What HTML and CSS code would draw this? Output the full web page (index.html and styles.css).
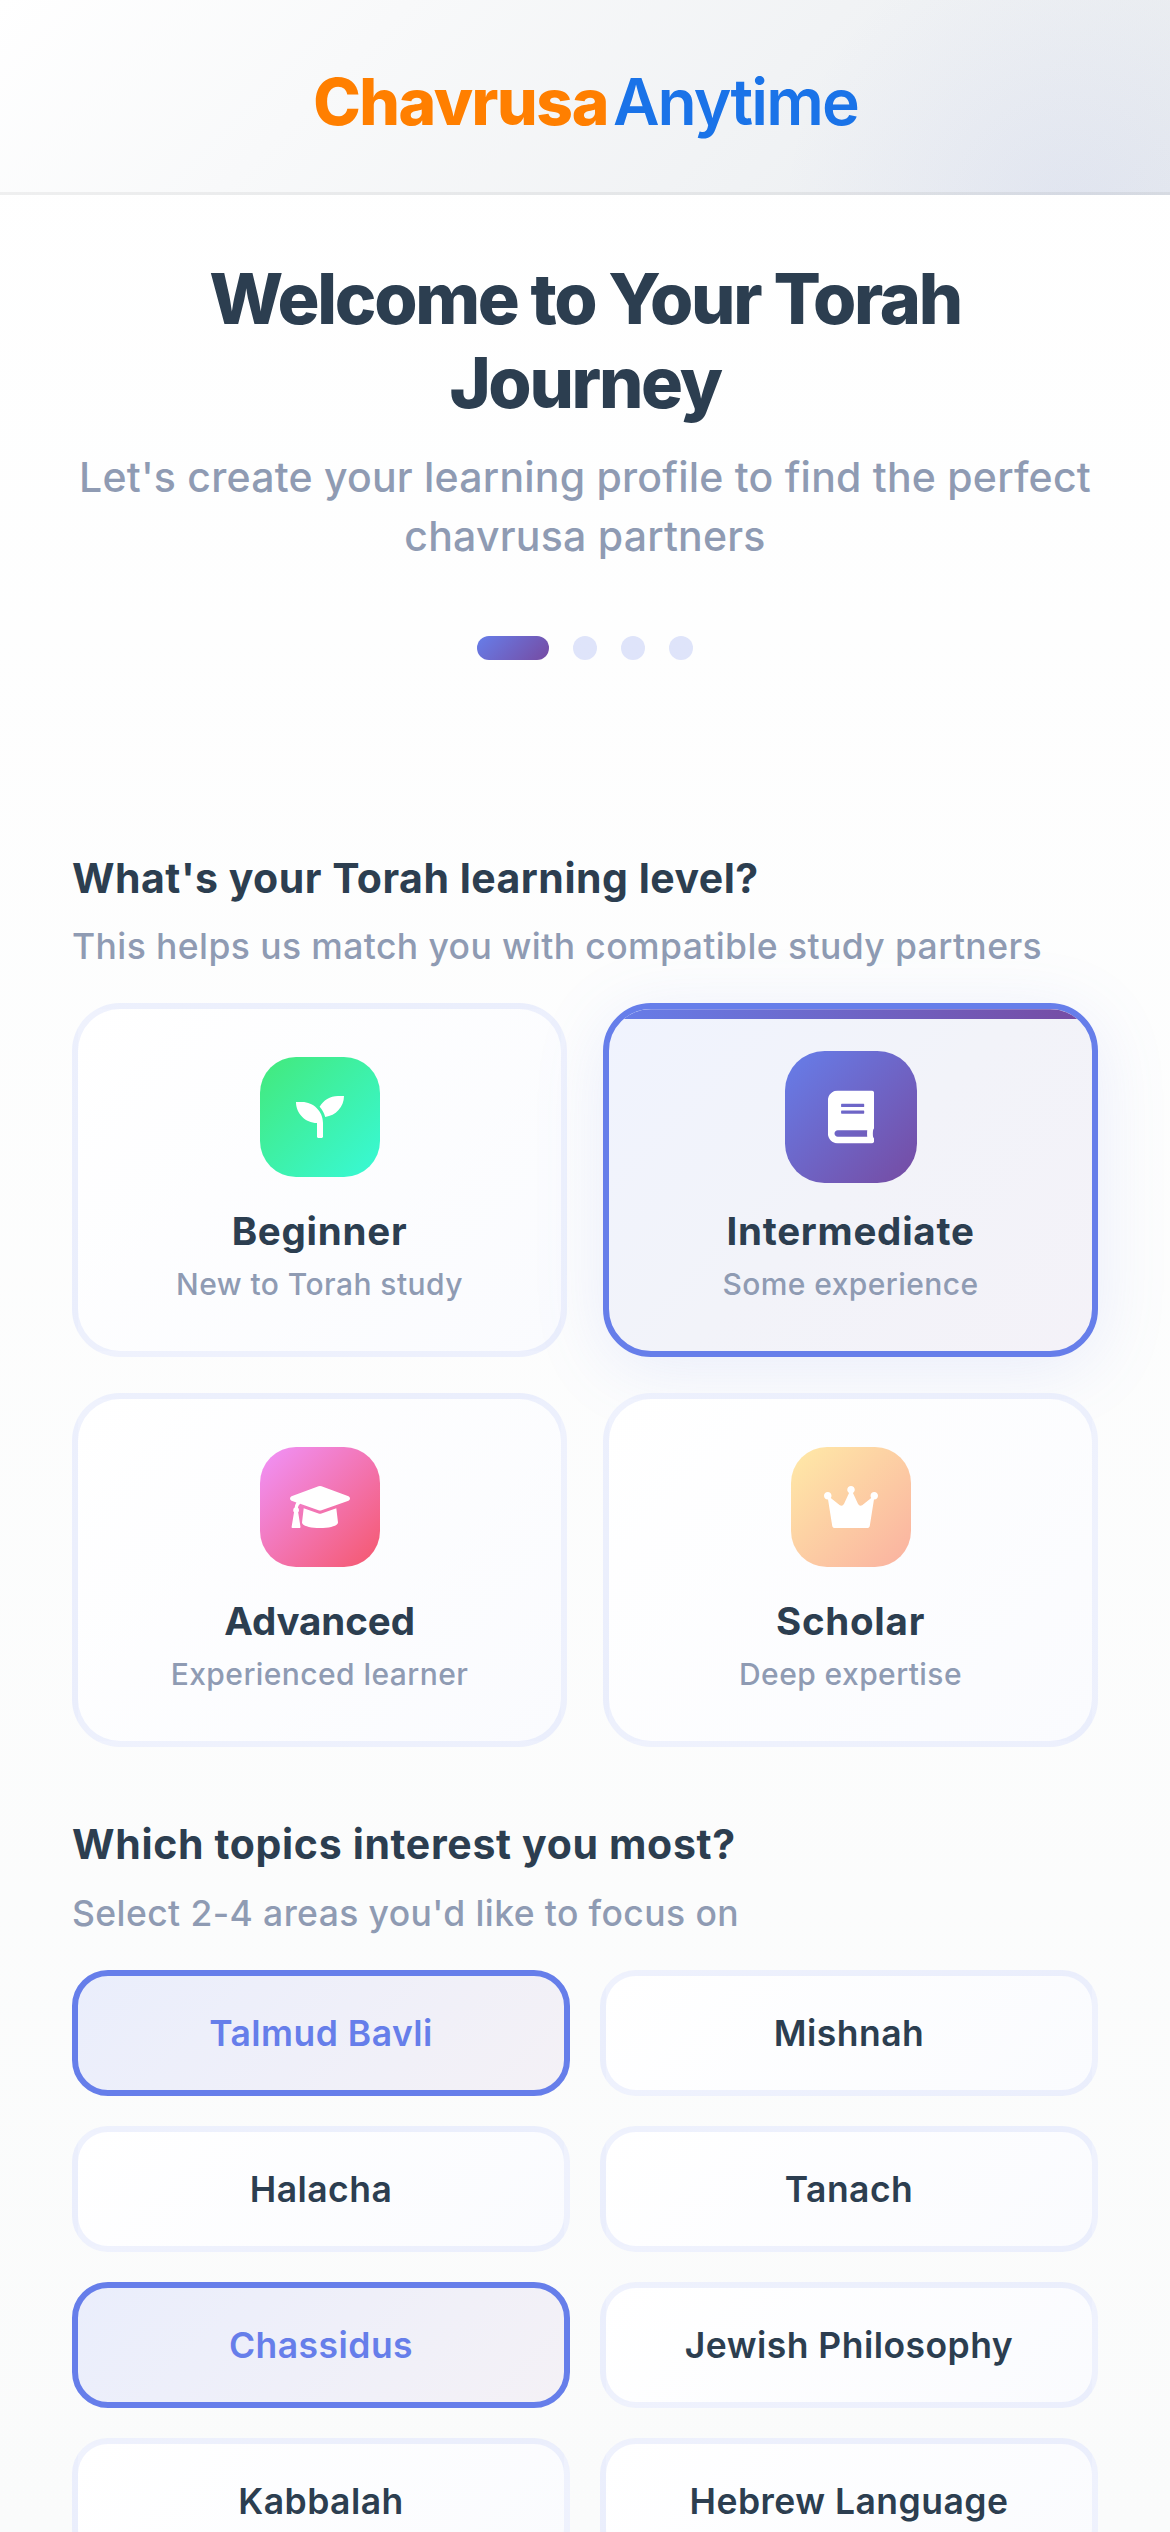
FILE: index.html
```html
<!DOCTYPE html>
<html lang="en">
<head>
<meta charset="utf-8">
<title>ChavrusaAnytime</title>
<link rel="stylesheet" href="styles.css">
</head>
<body>
<header class="header">
  <div class="logo"><span class="logo-first">Chavrusa</span><span class="logo-second">Anytime</span></div>
</header>
<main class="content">
  <section class="intro">
    <h1 class="title">Welcome to Your Torah<br>Journey</h1>
    <p class="subtitle">Let's create your learning profile to find the perfect<br>chavrusa partners</p>
    <div class="steps">
      <span class="step step-active"></span><span class="step"></span><span class="step"></span><span class="step"></span>
    </div>
  </section>

  <section class="question">
    <h2 class="question-title level-title">What's your Torah learning level?</h2>
    <p class="question-hint">This helps us match you with compatible study partners</p>
    <div class="levels">
      <div class="level">
        <div class="level-icon green">
          <svg class="icon" viewBox="0 0 512 512"><path d="M64 96H0c0 123.7 100.3 224 224 224v144c0 8.800 7.200 16 16 16h32c8.800 0 16-7.200 16-16V320C288 196.300 187.700 96 64 96zm384-64c-84.200 0-157.400 46.500-195.700 115.200 27.700 30.200 48.200 66.900 59 107.600C424 243.100 512 147.900 512 32h-64z"/></svg>
        </div>
        <h3 class="level-name">Beginner</h3>
        <p class="level-note">New to Torah study</p>
      </div>
      <div class="level level-selected">
        <div class="level-icon purple">
          <svg class="icon" viewBox="0 0 448 512"><path d="M448 360V24c0-13.300-10.700-24-24-24H96C43 0 0 43 0 96v320c0 53 43 96 96 96h328c13.300 0 24-10.700 24-24v-16c0-7.500-3.500-14.300-8.900-18.700-4.200-15.400-4.200-59.300 0-74.700 5.400-4.300 8.900-11.100 8.900-18.600zM128 134c0-3.300 2.700-6 6-6h212c3.300 0 6 2.700 6 6v20c0 3.300-2.700 6-6 6H134c-3.300 0-6-2.700-6-6v-20zm0 64c0-3.300 2.700-6 6-6h212c3.300 0 6 2.700 6 6v20c0 3.300-2.700 6-6 6H134c-3.300 0-6-2.700-6-6v-20zm253.400 250H96c-17.700 0-32-14.300-32-32 0-17.600 14.400-32 32-32h285.400c-1.900 17.100-1.900 46.900 0 64z"/></svg>
        </div>
        <h3 class="level-name">Intermediate</h3>
        <p class="level-note">Some experience</p>
      </div>
      <div class="level">
        <div class="level-icon pink">
          <svg class="icon" viewBox="0 0 640 512"><path d="M304 35q16-6 32 0L624 141q16 7 16 24t-16 24L336 290q-16 6-32 0L108 221Q88 238 84 262Q96 272 96 290Q96 304 87 313L112 468Q113 480 102 480H27Q15 480 17 468L43 313Q34 304 34 290Q34 270 50 261Q52 232 68 207L16 189Q0 182 0 165t16-24z"/><path d="M146 268L304 324q16 6 32 0L494 268L512 420C510 457 430 480 320 480S130 457 128 420z"/></svg>
        </div>
        <h3 class="level-name level-name-tight">Advanced</h3>
        <p class="level-note">Experienced learner</p>
      </div>
      <div class="level">
        <div class="level-icon yellow">
          <svg class="icon" viewBox="0 0 576 512"><path d="M309 106c11.400-7 19-19.700 19-34 0-22.100-17.900-40-40-40s-40 17.900-40 40c0 14.400 7.600 27 19 34L214 220q-16 32-45 17L72 160c5-6.700 8-15 8-24 0-22.100-17.900-40-40-40S0 113.900 0 136s17.900 40 40 40h3L87 452q4 28 32 28H457q28 0 32-28L533 176h3c22.100 0 40-17.900 40-40s-17.900-40-40-40-40 17.900-40 40c0 9 3 17.300 8 24l-97 77q-29 15-45-17z"/></svg>
        </div>
        <h3 class="level-name">Scholar</h3>
        <p class="level-note">Deep expertise</p>
      </div>
    </div>
  </section>

  <section class="question">
    <h2 class="question-title topics-title">Which topics interest you most?</h2>
    <p class="question-hint">Select 2-4 areas you'd like to focus on</p>
    <div class="topics">
      <div class="topic topic-selected">Talmud Bavli</div>
      <div class="topic">Mishnah</div>
      <div class="topic">Halacha</div>
      <div class="topic">Tanach</div>
      <div class="topic topic-selected">Chassidus</div>
      <div class="topic">Jewish Philosophy</div>
      <div class="topic">Kabbalah</div>
      <div class="topic">Hebrew Language</div>
    </div>
  </section>
</main>
</body>
</html>
```
FILE: styles.css
```css
* {
  box-sizing: border-box;
}

body {
  margin: 0;
  height: 2532px;
  overflow: hidden;
  font-family: Inter, "Liberation Sans", sans-serif;
  color: #2c3e50;
  background: linear-gradient(180deg, #ffffff 0%, #fafbfb 100%);
}

h1, h2, h3, p {
  margin: 0;
}

.header {
  height: 195px;
  padding-top: 62px;
  border-bottom: 3px solid rgba(0, 0, 0, 0.05);
  background:
    radial-gradient(circle 290px at 1070px 215px, rgba(102, 126, 234, 0.08) 0%, rgba(102, 126, 234, 0) 100%),
    linear-gradient(135deg, #ffffff 0%, #f8f9fa 30%, #e9ecef 100%);
  background-origin: border-box;
}

.logo {
  display: flex;
  justify-content: center;
  gap: 5px;
  padding-left: 1px;
  font-size: 64px;
  line-height: 80px;
}

.logo-first {
  color: #ff7f00;
  font-weight: 800;
  letter-spacing: -1.4px;
}

.logo-second {
  color: #1a73e8;
  font-weight: 600;
  letter-spacing: -1.89px;
}

.content {
  padding: 62px 72px 0;
}

.intro {
  text-align: center;
  white-space: nowrap;
}

.title {
  font-size: 70px;
  font-weight: 800;
  line-height: 84px;
  letter-spacing: -2.3px;
}

.subtitle {
  margin: 23px -20px 0;
  color: #8f9bb3;
  font-size: 41px;
  font-weight: 500;
  line-height: 59px;
  letter-spacing: 0.22px;
}

.steps {
  display: flex;
  justify-content: center;
  gap: 24px;
  margin-top: 70px;
}

.step {
  width: 24px;
  height: 24px;
  border-radius: 12px;
  background: rgba(102, 126, 234, 0.2);
}

.step-active {
  width: 72px;
  background: linear-gradient(135deg, #667eea, #764ba2);
}

.question-title {
  font-size: 41px;
  font-weight: 700;
  line-height: 48px;
}

.level-title {
  margin-top: 194px;
  letter-spacing: 0.5px;
}

.topics-title {
  margin-top: 73px;
  letter-spacing: 0.66px;
}

.question-hint {
  margin-top: 24px;
  color: #8f9bb3;
  font-size: 35.5px;
  font-weight: 500;
  line-height: 42px;
  letter-spacing: 0.4px;
}

.topics-title + .question-hint {
  margin-top: 25px;
}

.levels {
  display: grid;
  grid-template-columns: 1fr 1fr;
  gap: 36px;
  margin-top: 35px;
}

.level {
  position: relative;
  height: 354px;
  padding: 48px 0;
  display: flex;
  flex-direction: column;
  align-items: center;
  overflow: hidden;
  border: 6px solid rgba(102, 126, 234, 0.1);
  border-radius: 48px;
  background: linear-gradient(135deg, #ffffff, #fafbfe);
}

.level-selected {
  border-color: #667eea;
  background: linear-gradient(135deg, #f0f3fe, #f2f3f9 50%, #f4f2f8);
  box-shadow: 0 12px 72px rgba(102, 126, 234, 0.13);
}

.level-selected::before {
  content: "";
  position: absolute;
  top: 0;
  left: 0;
  right: 0;
  height: 9px;
  border-top: 1px solid rgba(255, 255, 255, 0.22);
  background: linear-gradient(90deg, #667eea, #764ba2) border-box;
}

.level-icon {
  width: 120px;
  height: 120px;
  display: grid;
  place-items: center;
  border-radius: 36px;
}

.level-selected .level-icon {
  transform: scale(1.1);
}

.green { background: linear-gradient(135deg, #43e97b, #38f9d7); }
.purple { background: linear-gradient(135deg, #667eea, #764ba2); }
.pink { background: linear-gradient(135deg, #f093fb, #f5576c); }
.yellow { background: linear-gradient(135deg, #ffeaa7, #fab1a0); }

.icon {
  display: block;
  height: 48px;
  fill: #ffffff;
}

.level-name {
  margin-top: 31px;
  font-size: 38.5px;
  font-weight: 700;
  line-height: 46px;
  letter-spacing: 0.75px;
}

.level-name-tight {
  letter-spacing: -0.1px;
}

.level-note {
  margin-top: 12px;
  color: #8f9bb3;
  font-size: 30px;
  font-weight: 500;
  line-height: 36px;
  letter-spacing: 0.43px;
}

.topics {
  display: grid;
  grid-template-columns: 1fr 1fr;
  gap: 30px;
  margin-top: 35px;
}

.topic {
  height: 126px;
  padding: 37px 0 35px;
  border: 6px solid rgba(102, 126, 234, 0.1);
  border-radius: 36px;
  background: linear-gradient(135deg, #ffffff, #fafbfe);
  font-size: 35.5px;
  font-weight: 600;
  line-height: 42px;
  letter-spacing: 0.47px;
  text-align: center;
}

.topic-selected {
  border-color: #667eea;
  color: #667eea;
  background: linear-gradient(135deg, #eaeefc, #f4f1f6);
}
```
